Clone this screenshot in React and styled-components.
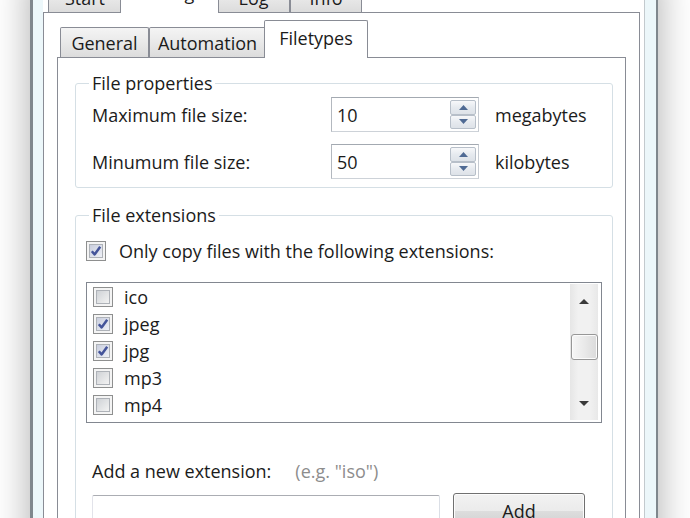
import React from 'react';
import styled, { createGlobalStyle } from 'styled-components';

const Global = createGlobalStyle`
  html, body { margin: 0; padding: 0; background: #ffffff; }
  * { box-sizing: border-box; }
`;

const Screen = styled.div`
  width: 690px;
  height: 518px;
  overflow: hidden;
  background: #ffffff;
  display: flex;
  align-items: flex-start;
  font-family: "Open Sans", "Noto Sans", sans-serif;
  font-size: 18px;
  color: #1b1b1b;
`;

const Window = styled.div`
  flex: none;
  margin-left: 30px;
  margin-top: -25px;
  width: 628px;
  height: 580px;
  display: flex;
  background: #ecf7fa;
  border-left: 3px solid #7f878d;
  border-right: 2px solid #7f878d;
  padding: 0 11px 0 10px;
  box-shadow: 0 0 34px 2px rgba(0, 0, 0, 0.3);
`;

const Client = styled.div`
  width: 602px;
  background: #ffffff;
  border-right: 1px solid #c3cace;
  display: flex;
  flex-direction: column;
`;

const TabControl = styled.div`
  display: flex;
  flex-direction: column;
  flex: 1;
  width: ${p => p.$w}px;
`;

const TabStrip = styled.div`
  display: flex;
  align-items: flex-end;
  height: 37px;
  flex: none;
  padding-left: ${p => p.$inset}px;
  position: relative;
  z-index: 1;
`;

const Tab = styled.div`
  flex: none;
  width: ${p => p.$w}px;
  height: ${p => (p.$active ? 38 : 30)}px;
  margin: 0 ${p => (p.$active ? -2 : 0)}px ${p => (p.$active ? -1 : 0)}px;
  border: 1px solid #898c95;
  border-bottom: none;
  border-radius: 2px 2px 0 0;
  background: ${p =>
    p.$active ? '#ffffff' : 'linear-gradient(#f4f4f4, #e9e9e9 50%, #dcdcdc)'};
  display: flex;
  justify-content: center;
  padding-top: ${p => (p.$active ? 6 : 4)}px;
  line-height: 22px;
  white-space: nowrap;
  position: relative;
  z-index: ${p => (p.$active ? 2 : 1)};
`;

const Page = styled.div`
  flex: 1;
  display: flex;
  flex-direction: column;
  border: 1px solid #898c95;
  border-bottom: none;
  background: #ffffff;
  padding: ${p => p.$pad};
`;

const Group = styled.fieldset`
  margin: ${p => p.$mt || 0}px 0 0;
  border: 1px solid #d5dfe5;
  border-radius: 3px;
  padding: 0 10px ${p => p.$pb || 0}px 10px;
  min-width: 0;
  display: flex;
  flex-direction: column;
`;

const Legend = styled.legend`
  padding: 0 3px;
  margin-left: 3px;
  line-height: 22px;
`;

const Rows = styled.div`
  display: flex;
  flex-direction: column;
  gap: 12px;
  padding: 3px 0 0 6px;
`;

const SizeRow = styled.div`
  display: grid;
  grid-template-columns: 223px 148px auto;
  column-gap: 16px;
  align-items: center;
  line-height: 22px;
  white-space: nowrap;
`;

const SpinBox = styled.div`
  height: 35px;
  border: 1px solid;
  border-color: #a3a9b1 #c6cbd2 #cdd2d8 #b3b8bf;
  display: flex;
  padding: 2px;
  background: #ffffff;
`;

const SpinValue = styled.div`
  flex: 1;
  display: flex;
  align-items: center;
  padding-left: 3px;
`;

const SpinButtons = styled.div`
  width: 26px;
  display: flex;
  flex-direction: column;
`;

const SpinButton = styled.div`
  flex: 1;
  display: flex;
  align-items: center;
  justify-content: center;
  border: 1px solid #b7bfc9;
  border-radius: 2px;
  background: linear-gradient(#f7f8fa, #e6eaef 50%, #dde2e8);
`;

const Arrow = ({ dir, color = '#4f6a94', w = 9, h = 5 }) => (
  <svg width={w} height={h} viewBox={`0 0 ${w} ${h}`}>
    {dir === 'up' ? (
      <polygon points={`0,${h} ${w / 2},0 ${w},${h}`} fill={color} />
    ) : (
      <polygon points={`0,0 ${w / 2},${h} ${w},0`} fill={color} />
    )}
  </svg>
);

const CheckRow = styled.label`
  display: flex;
  align-items: center;
  gap: 13px;
  height: 22px;
  margin-top: 14px;
  line-height: 22px;
  white-space: nowrap;
`;

const Box = styled.span`
  flex: none;
  width: 20px;
  height: 20px;
  border: 1px solid #8e8f8f;
  background: #f4f4f4;
  padding: 2px;
  display: flex;
`;

const BoxInner = styled.span`
  flex: 1;
  display: flex;
  align-items: center;
  justify-content: center;
  border: 1px solid #aeb2b8;
  background: ${p =>
    p.$checked
      ? 'linear-gradient(135deg, #c9cede, #eef0f6)'
      : 'linear-gradient(135deg, #cfd2d6, #f3f3f3)'};
`;

const CheckBox = ({ checked }) => (
  <Box>
    <BoxInner $checked={checked}>
      {checked && (
        <svg width="12" height="12" viewBox="0 0 12 12">
          <path
            d="M1.8 6.2 L4.6 9.4 L10.2 1.8"
            fill="none"
            stroke="#44549a"
            strokeWidth="2.5"
            strokeLinejoin="round"
          />
        </svg>
      )}
    </BoxInner>
  </Box>
);

const ListBox = styled.div`
  margin-top: 20px;
  height: 141px;
  border: 1px solid #828790;
  display: flex;
  background: #ffffff;
`;

const Items = styled.div`
  flex: 1;
  display: flex;
  flex-direction: column;
  padding-left: 6px;
`;

const Item = styled.div`
  height: 27px;
  display: flex;
  align-items: center;
  gap: 11px;
  line-height: 22px;
`;

const ScrollBar = styled.div`
  width: 28px;
  margin: 1px 3px 2px 0;
  display: flex;
  flex-direction: column;
  background: linear-gradient(90deg, #e6e6e6, #f1f1f1 30%, #f1f1f1 70%, #e8e8e8);
`;

const ScrollButton = styled.div`
  height: ${p => p.$h}px;
  display: flex;
  align-items: center;
  justify-content: center;
`;

const Track = styled.div`
  flex: 1;
  display: flex;
  flex-direction: column;
  align-items: center;
  padding-top: 16px;
`;

const Thumb = styled.div`
  width: 27px;
  height: 26px;
  border: 1px solid #979797;
  border-radius: 3px;
  background: linear-gradient(90deg, #f6f6f6, #e9e9e9 50%, #dadada);
  box-shadow: inset 0 0 0 1px #fbfbfb;
`;

const HintRow = styled.div`
  display: flex;
  gap: 24px;
  margin-top: 37px;
  padding-left: 6px;
  line-height: 22px;
  white-space: nowrap;
`;

const Hint = styled.span`
  color: #8d8d8d;
`;

const InputRow = styled.div`
  display: flex;
  align-items: flex-start;
  gap: 13px;
  margin-top: 11px;
  padding-left: 6px;
`;

const TextInput = styled.div`
  width: 348px;
  height: 34px;
  margin-top: 2px;
  border: 1px solid;
  border-color: #abadb3 #dbdfe6 #e3e9ef #e2e3ea;
  border-radius: 2px;
  background: #ffffff;
`;

const Button = styled.div`
  width: 132px;
  height: 36px;
  border: 1px solid #707070;
  border-radius: 3px;
  background: linear-gradient(#f2f2f2, #ebebeb 50%, #dddddd 51%, #cfcfcf);
  box-shadow: inset 0 0 0 1px #fcfcfc;
  display: flex;
  align-items: center;
  justify-content: center;
  line-height: 22px;
`;

const outerTabs = [
  { label: 'Start', w: 74 },
  { label: 'Settings', w: 99, active: true },
  { label: 'Log', w: 73 },
  { label: 'Info', w: 72 },
];

const innerTabs = [
  { label: 'General', w: 89 },
  { label: 'Automation', w: 117 },
  { label: 'Filetypes', w: 104, active: true },
];

const extensions = [
  { name: 'ico', checked: false },
  { name: 'jpeg', checked: true },
  { name: 'jpg', checked: true },
  { name: 'mp3', checked: false },
  { name: 'mp4', checked: false },
];

const Spinner = ({ value }) => (
  <SpinBox>
    <SpinValue>{value}</SpinValue>
    <SpinButtons>
      <SpinButton><Arrow dir="up" /></SpinButton>
      <SpinButton><Arrow dir="down" /></SpinButton>
    </SpinButtons>
  </SpinBox>
);

export default function App() {
  return (
    <>
      <Global />
      <Screen>
        <Window>
          <Client>
            <TabControl $w={597}>
              <TabStrip $inset={5}>
                {outerTabs.map(t => (
                  <Tab key={t.label} $w={t.w} $active={t.active}>
                    {t.label}
                  </Tab>
                ))}
              </TabStrip>
              <Page $pad="7px 13px 0 13px">
                <TabControl $w={569}>
                  <TabStrip $inset={3}>
                    {innerTabs.map(t => (
                      <Tab key={t.label} $w={t.w} $active={t.active}>
                        {t.label}
                      </Tab>
                    ))}
                  </TabStrip>
                  <Page $pad="14px 12px 0 17px">
                    <Group $pb={8}>
                      <Legend>File properties</Legend>
                      <Rows>
                        <SizeRow>
                          <span>Maximum file size:</span>
                          <Spinner value="10" />
                          <span>megabytes</span>
                        </SizeRow>
                        <SizeRow>
                          <span>Minumum file size:</span>
                          <Spinner value="50" />
                          <span>kilobytes</span>
                        </SizeRow>
                      </Rows>
                    </Group>
                    <Group $mt={16} $pb={30}>
                      <Legend>File extensions</Legend>
                      <CheckRow>
                        <CheckBox checked />
                        <span>Only copy files with the following extensions:</span>
                      </CheckRow>
                      <ListBox>
                        <Items>
                          {extensions.map(e => (
                            <Item key={e.name}>
                              <CheckBox checked={e.checked} />
                              <span>{e.name}</span>
                            </Item>
                          ))}
                        </Items>
                        <ScrollBar>
                          <ScrollButton $h={34}>
                            <Arrow dir="up" color="#3a3a3a" w={10} h={5} />
                          </ScrollButton>
                          <Track>
                            <Thumb />
                          </Track>
                          <ScrollButton $h={33}>
                            <Arrow dir="down" color="#3a3a3a" w={10} h={5} />
                          </ScrollButton>
                        </ScrollBar>
                      </ListBox>
                      <HintRow>
                        <span>Add a new extension:</span>
                        <Hint>(e.g. "iso")</Hint>
                      </HintRow>
                      <InputRow>
                        <TextInput />
                        <Button>Add</Button>
                      </InputRow>
                    </Group>
                  </Page>
                </TabControl>
              </Page>
            </TabControl>
          </Client>
        </Window>
      </Screen>
    </>
  );
}
